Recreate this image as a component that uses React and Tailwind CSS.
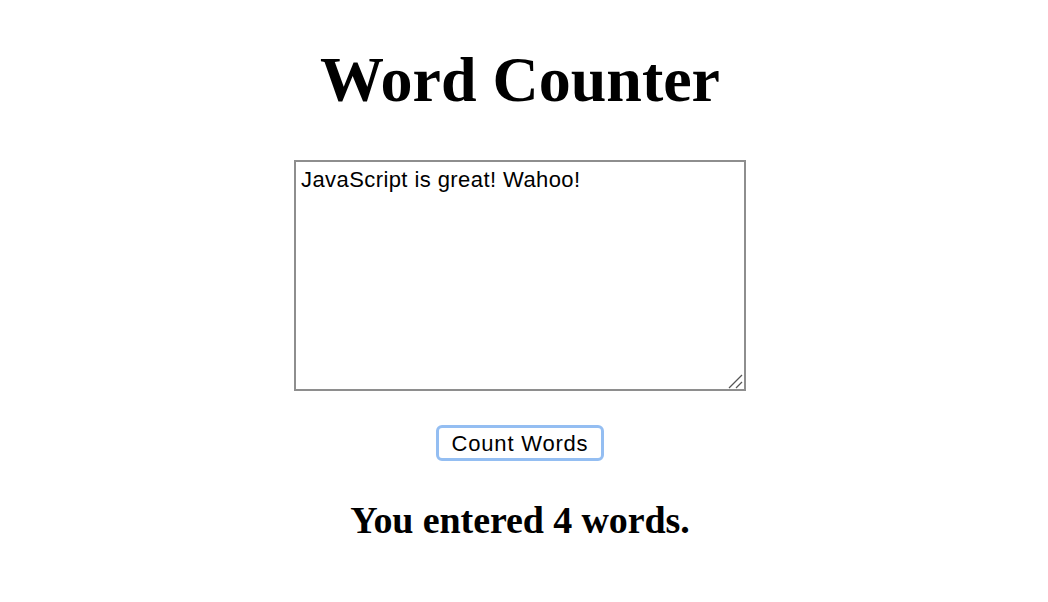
import { useState } from 'react';

const App = () => {
    const [text, setText] = useState('JavaScript is great! Wahoo!');
    const [count, setCount] = useState(4);

    const handleCount = () => {
        const words = text.trim().split(/\s+/).filter(Boolean);
        setCount(words.length);
    };

    return (
        <div className="min-h-screen bg-white">
            <div className="w-[1040px] flex flex-col items-center text-black">
                {/* Title */}
                <h1 className="mt-[42px] text-[64px] leading-[76px] font-bold font-['Liberation_Serif',serif]">
                    Word Counter
                </h1>

                {/* Input */}
                <div className="relative mt-[42px]">
                    <textarea
                        value={text}
                        onChange={(e) => setText(e.target.value)}
                        className="block w-[452px] h-[231px] border-2 border-[#8e8e8e] px-[5px] pt-[5px] pb-[3px] text-[22px] leading-[26px] tracking-[0.42px] font-['Liberation_Sans',Arial,sans-serif] resize-none outline-none"
                    />
                    {/* resize grip */}
                    <svg className="absolute right-[3px] bottom-[2px] pointer-events-none" width="16" height="16" viewBox="0 0 16 16">
                        <line x1="2" y1="15" x2="15" y2="2" stroke="#555" strokeWidth="1.3" />
                        <line x1="9" y1="15" x2="15" y2="9" stroke="#555" strokeWidth="1.3" />
                    </svg>
                </div>

                {/* Button */}
                <button
                    onClick={handleCount}
                    className="mt-[34px] w-[168px] h-[36px] pt-[2px] rounded-[6px] border-[3px] border-[#94bef2] bg-white text-[22px] leading-none tracking-[0.8px] font-['Liberation_Sans',Arial,sans-serif] flex items-center justify-center"
                >
                    Count Words
                </button>

                {/* Result */}
                <h2 className="mt-[37px] text-[38px] leading-[44px] tracking-[-0.1px] font-bold font-['Liberation_Serif',serif]">
                    You entered {count} words.
                </h2>
            </div>
        </div>
    );
};

export default App;
